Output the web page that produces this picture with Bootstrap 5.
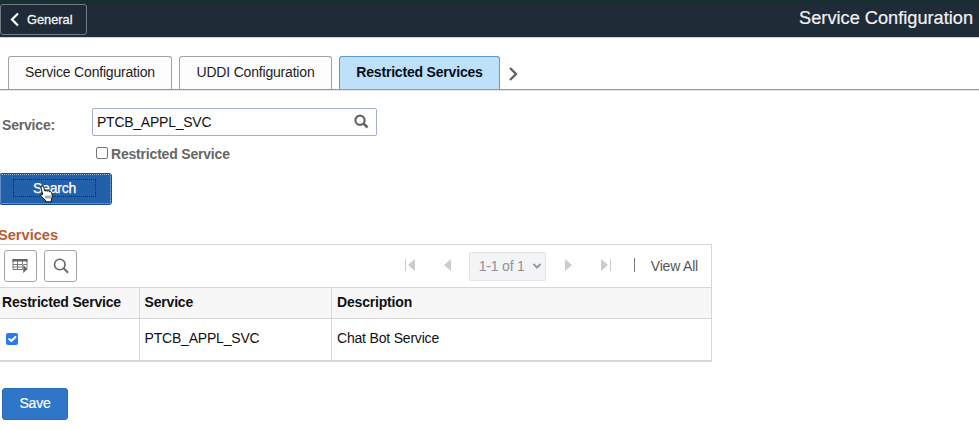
<!DOCTYPE html>
<html lang="en">
<head>
<meta charset="utf-8">
<title>Service Configuration</title>
<link href="https://cdn.jsdelivr.net/npm/bootstrap@5.3.0/dist/css/bootstrap.min.css" rel="stylesheet">
<style>
body{font-family:"Liberation Sans",Arial,sans-serif;font-size:14px;letter-spacing:-.19px;line-height:16px;color:#111;background:#fff;overflow:hidden}
svg{display:block;flex:none}
.btn{letter-spacing:-.19px}
.topbar{height:37px;background:#202b38;border-top:2px solid #12302c;box-shadow:0 1px #d2d4d6}
.back-btn{width:87px;height:31px;margin:2px 0 0 0;border:1px solid #727b86;border-radius:3px;color:#f2f4f6;font-size:12.8px;letter-spacing:0;line-height:16px;padding:0 0 0 9px;-webkit-text-stroke:.3px #f2f4f6}
.page-title{font-size:18.2px;letter-spacing:0;line-height:22px;color:#f0f2f4;padding:5px 6px 0 0;-webkit-text-stroke:.2px #f0f2f4}
.tabstrip{height:53px;padding:19px 0 0 8px;gap:7px;border-bottom:1px solid #999;box-shadow:0 1px #e4e4e4}
.tabstrip .nav-link{height:33px;padding:7px 0 0;text-align:center;color:#1d1d1d;background:#fdfdfd;border:1px solid #a2a2a2;border-bottom:0;border-radius:3px 3px 0 0;line-height:16px}
.tabstrip .nav-link.active{background:#bfe0f9;border-color:#5c9bd6;color:#06101c;font-weight:700}
.t1{width:164px}.t2{width:153px}.t3{width:161px}
.tab-next{margin:8px 0 0 2px}
.lbl{color:#666;font-weight:700}
.service-row{padding-top:18px}
.svc-label{width:92px;padding:9px 0 0 2px}
.lookup{width:285px;height:28px;border:1px solid #9fb0cc;border-radius:2px;padding:0 7px 0 4px;color:#111;letter-spacing:-.25px}
.restricted{margin:10px 0 0 96px;height:16px;gap:3px}
.restricted input{width:12px;height:12px;margin:0 0 2px;border:1px solid #777;min-height:0}
.restricted .form-check-input,.svc-table .form-check-input{border-radius:2px}
.search-btn{width:113px;height:32px;margin:11px 0 0 -1px;background:#2260aa;border:1px solid #174b8c;border-radius:3px;outline:1px dotted #9fc0e8;outline-offset:-2px;color:#fff;padding:0 2px 2px 0;position:relative}
.search-btn span{width:83px;height:18px;border:1px dotted #0b2c5c;line-height:16px;font-size:14px;-webkit-text-stroke:.25px #fff}
.pointer{position:absolute;left:39px;top:11px}
.grid-title{color:#b85c32;font-weight:700;font-size:14.6px;letter-spacing:0;line-height:16px;margin:22px 0 1px -2px}
.grid-box{width:712px;height:118px;border:solid #d4d7da;border-width:1px 1px 2px 0}
.toolbar{height:42px;padding:0 13px 0 4px}
.tool{width:33px;height:32px;border:1px solid #a3a3a3;border-radius:3px;padding:0;margin-right:7px}
.pager-nav{gap:18px;line-height:14px}
.arrow{margin-bottom:3px}
.arrow-first{margin-right:9px}
.arrow-next{margin-right:10px}
.divider{width:1px;height:14px;background:#777;margin:0 -2px 3px 4px}
.pager{width:77px;height:29px;background:#f3f4f6;border:1px solid #e2e4e7;border-radius:2px;color:#8f9296;font-size:14px;padding:0 3px 0 9px}
.view-all{color:#555}
.svc-table{width:711px;table-layout:fixed;margin:0;border-collapse:collapse;color:#111}
.svc-table th,.svc-table td{border:solid #d6d7d9;border-width:1px 0 0 1px;padding:0 5px;vertical-align:middle}
.svc-table tr>:last-child{padding-left:5.5px}
.svc-table tr>:first-child{border-left:0;padding-left:2px}
.svc-table th{height:31px;background:#f7f7f7;color:#111;font-size:14px;letter-spacing:-.18px;padding-bottom:2px}
.svc-table td{height:42px;padding-bottom:4px}
.svc-table input{width:12px;height:12px;min-height:0;border:0;margin:2px 0 0 4px;display:block}
.svc-table input:checked{background-color:#2878f0;background-size:14px}
.save-btn{width:66px;height:32px;margin:26px 0 0 2px;background:#2f75c8;border:1px solid #2869b8;border-radius:3px;color:#fff;padding:0 0 2px;font-size:14px;line-height:16px;-webkit-text-stroke:.2px #fff}
</style>
<script src="https://cdn.jsdelivr.net/npm/bootstrap@5.3.0/dist/js/bootstrap.bundle.min.js"></script>
</head>
<body>
<header class="topbar d-flex justify-content-between align-items-start">
  <button class="btn back-btn d-flex align-items-center">
    <svg width="9" height="15" viewBox="0 0 9 15"><path d="M8 1.500 2 7.500l6 6" fill="none" stroke="#fff" stroke-width="2.2"/></svg>
    <span class="ms-2">General</span>
  </button>
  <h1 class="page-title fw-normal m-0">Service Configuration</h1>
</header>
<nav class="nav tabstrip d-flex flex-nowrap">
  <a class="nav-link t1">Service Configuration</a>
  <a class="nav-link t2">UDDI Configuration</a>
  <a class="nav-link active t3">Restricted Services</a>
  <svg class="tab-next" width="10" height="20" viewBox="1 0 10 20"><path d="M2 4 8 10l-6 6" fill="none" stroke="#626262" stroke-width="2.4"/></svg>
</nav>
<main>
  <div class="service-row d-flex">
    <label class="lbl svc-label">Service:</label>
    <div class="lookup d-flex align-items-center justify-content-between">
      <span>PTCB_APPL_SVC</span>
      <svg width="15" height="16" viewBox="0 0 15 16" fill="none" stroke="#666"><circle cx="6" cy="6.300" r="4.600" stroke-width="2.2"/><path d="m9.500 9.500 4 4" stroke-width="2.7"/></svg>
    </div>
  </div>
  <div class="restricted d-flex align-items-center">
    <input class="form-check-input" type="checkbox" id="only"><label class="lbl" for="only">Restricted Service</label>
  </div>
  <button class="btn search-btn d-flex align-items-center justify-content-center"><span>Search</span>
    <svg class="pointer" width="15" height="18" viewBox="0 0 14 18"><path d="M3.200 9.500 1.500 3Q1.300 1.200 2.500.900 3.600.700 4.100 2L5.300 6q1.700-1 2.500.200 1.500-.8 2.200.4 1.800-.3 2.300 1.200l.5 3.700-1 3.500v1.800H6v-1.500L1.200 11Q.7 9 3.200 9.500z" fill="#fff" stroke="#111"/><path d="M6.500 10.500v3M8.500 10.500v3M10.500 10.500v3" stroke="#111" stroke-width=".7"/></svg>
  </button>
  <h2 class="grid-title">Services</h2>
  <section class="grid-box">
    <div class="toolbar d-flex align-items-center">
      <button class="btn tool d-flex align-items-center justify-content-center">
        <svg width="17" height="16" viewBox="0 0 17 16"><path d="M1 1.500h14v10H1z" fill="#fff" stroke="#777"/><path d="M.5 1h15v2.500H.5z" fill="#666"/><path d="M1 6.500h14M1 9h10M5.500 3v8.500M10.500 3v8.500" stroke="#777"/><path d="M11 6.500v9l5-4.500z" fill="#666" stroke="#fff" stroke-width=".5"/></svg>
      </button>
      <button class="btn tool d-flex align-items-center justify-content-center">
        <svg width="16" height="16" viewBox="0 0 16 16" fill="none" stroke="#666"><circle cx="6.800" cy="6.500" r="5.300" stroke-width="1.6"/><path d="m10.700 10.400 4.300 4.300" stroke-width="2"/></svg>
      </button>
      <div class="pager-nav d-flex align-items-center ms-auto">
        <svg class="arrow arrow-first" width="12" height="14" viewBox="0 0 12 14" fill="#ccc"><path d="M1 1h1v12H1zM11 1v12L4 7z"/></svg>
        <svg class="arrow" width="8" height="14" viewBox="0 0 8 14" fill="#ccc"><path d="M8 1v12L1 7z"/></svg>
        <div class="pager d-flex align-items-center justify-content-between"><span>1-1 of 1</span><svg width="10" height="8" viewBox="0 0 10 8"><path d="m1.500 2 3.500 3.500L8.500 2" fill="none" stroke="#999" stroke-width="2"/></svg></div>
        <svg class="arrow arrow-next" width="8" height="14" viewBox="0 0 8 14" fill="#ccc"><path d="M1 1v12l7-6z"/></svg>
        <svg class="arrow" width="12" height="14" viewBox="0 0 12 14" fill="#ccc"><path d="M10 1h1v12h-1zM1 1v12l7-6z"/></svg>
        <span class="divider"></span>
        <a class="view-all text-decoration-none">View All</a>
      </div>
    </div>
    <table class="svc-table">
      <colgroup><col style="width:139px"><col style="width:192px"><col></colgroup>
      <thead><tr><th>Restricted Service</th><th>Service</th><th>Description</th></tr></thead>
      <tbody><tr><td><input class="form-check-input" type="checkbox" checked></td><td>PTCB_APPL_SVC</td><td>Chat Bot Service</td></tr></tbody>
    </table>
  </section>
  <button class="btn save-btn">Save</button>
</main>
</body>
</html>
